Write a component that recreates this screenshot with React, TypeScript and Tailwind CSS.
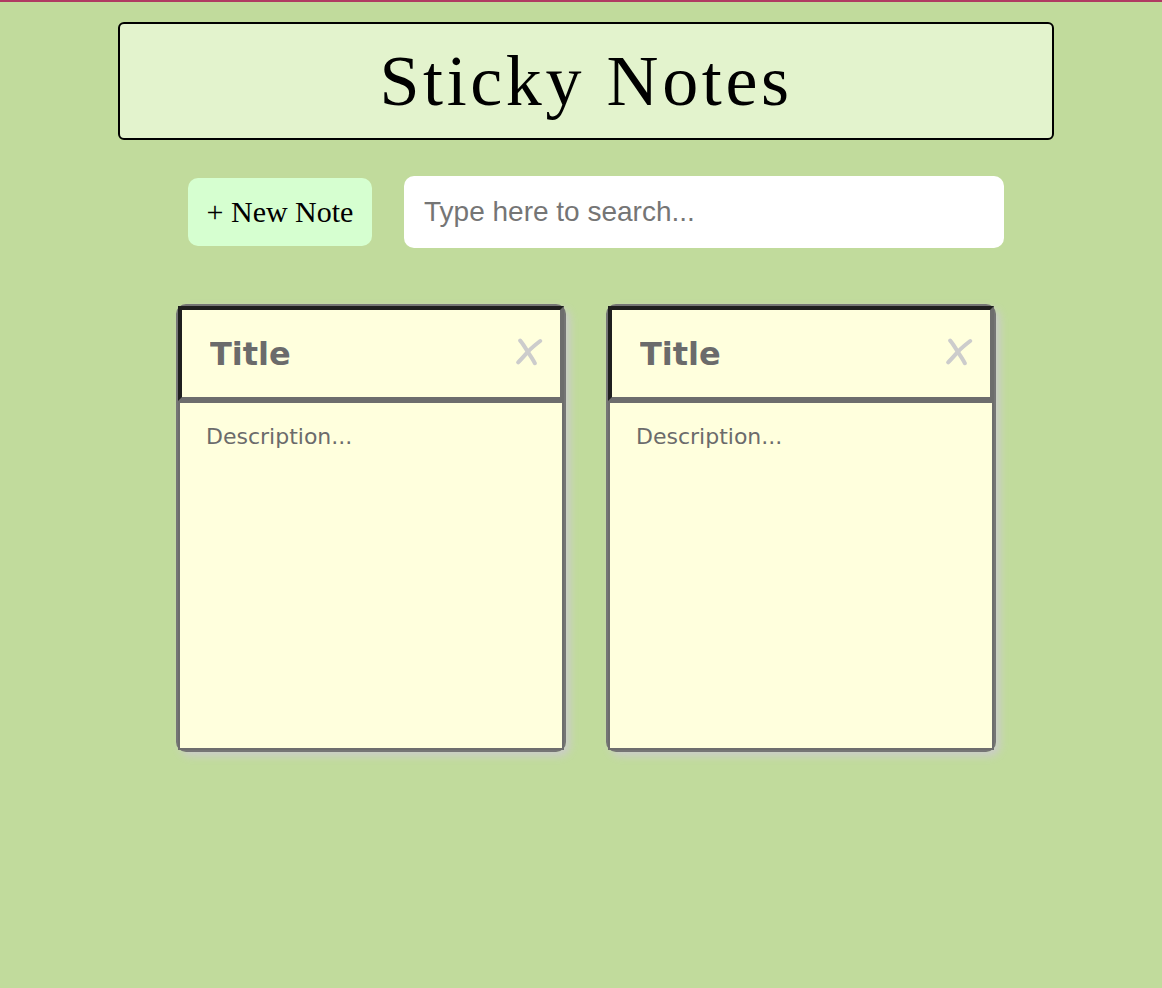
import { useState } from "react";

type Note = { id: number; title: string; description: string };

function CrossIcon() {
  return (
    <svg
      viewBox="0 0 28 28"
      className="size-7"
      fill="none"
      stroke="#cccccc"
      strokeWidth="4"
      strokeLinecap="round"
      aria-hidden="true"
    >
      <path d="M4.200 2.600C6.500 5.200 9.500 10 12 14.200C14.500 18 17 21.500 18.800 25.200" />
      <path d="M24.200 3C19.500 6.600 15.200 10.200 11.600 14C8.500 17.500 5.500 21 2.200 24.300" />
    </svg>
  );
}

type NoteCardProps = {
  note: Note;
  onChange: (note: Note) => void;
  onDelete: () => void;
};

function NoteCard({ note, onChange, onDelete }: NoteCardProps) {
  return (
    <li className="flex flex-col rounded-[10px] border-2 border-[#757575] shadow-[4px_4px_8px_#cccccc]">
      <div className="flex items-center border-4 border-t-[#1f1f1f] border-r-[#6d6d6d] border-b-[#6d6d6d] border-l-[#1f1f1f] bg-[#ffffdd] pr-4 pl-7">
        <input
          type="text"
          aria-label="Note title"
          placeholder="Title"
          value={note.title}
          onChange={(e) => onChange({ ...note, title: e.target.value })}
          className="h-[87px] min-w-0 flex-1 bg-transparent font-['DejaVu_Sans',sans-serif] text-[32px] font-bold text-[#6b6b6b] outline-none placeholder:text-[#6b6b6b]"
        />
        <button
          type="button"
          aria-label="Delete note"
          onClick={onDelete}
          className="cursor-pointer pb-1"
        >
          <CrossIcon />
        </button>
      </div>
      <textarea
        aria-label="Note description"
        placeholder="Description..."
        value={note.description}
        onChange={(e) => onChange({ ...note, description: e.target.value })}
        className="block h-[349px] w-full resize-none border-2 border-[#6d6d6d] bg-[#ffffdd] px-[26px] py-5 font-['DejaVu_Sans',sans-serif] text-[22px] leading-7 text-[#6b6b6b] outline-none placeholder:text-[#6b6b6b]"
      />
    </li>
  );
}

export default function App() {
  const [notes, setNotes] = useState<Note[]>([
    { id: 1, title: "", description: "" },
    { id: 2, title: "", description: "" },
  ]);
  const [query, setQuery] = useState("");

  const visible = notes.filter((n) =>
    (n.title + " " + n.description).toLowerCase().includes(query.toLowerCase()),
  );

  return (
    <div className="min-h-screen border-t-2 border-[#b03a62] bg-[#c1db9c] pt-5 pr-[108px] pb-10 pl-[118px]">
      <header className="rounded-md border-2 border-black bg-[#e3f3cd] py-5 text-center">
        <h1 className="font-['Liberation_Serif',serif] text-7xl leading-[74px] tracking-wider text-black">
          Sticky Notes
        </h1>
      </header>
      <main>
        <div className="mt-9 mr-[50px] ml-[70px] flex items-center gap-8">
          <button
            type="button"
            onClick={() => setNotes([...notes, { id: Date.now(), title: "", description: "" }])}
            className="h-[68px] w-[184px] shrink-0 cursor-pointer rounded-[10px] bg-[#d6ffd0] font-['Liberation_Serif',serif] text-3xl whitespace-nowrap text-black"
          >
            + New Note
          </button>
          <input
            type="text"
            aria-label="Search notes"
            placeholder="Type here to search..."
            value={query}
            onChange={(e) => setQuery(e.target.value)}
            className="h-[72px] min-w-0 flex-1 rounded-[10px] bg-white px-5 font-['Liberation_Sans',sans-serif] text-[28px] text-black outline-none placeholder:text-[#757575]"
          />
        </div>
        <ul className="mx-[58px] mt-14 grid grid-cols-2 gap-10">
          {visible.map((note) => (
            <NoteCard
              key={note.id}
              note={note}
              onChange={(next) => setNotes(notes.map((n) => (n.id === next.id ? next : n)))}
              onDelete={() => setNotes(notes.filter((n) => n.id !== note.id))}
            />
          ))}
        </ul>
      </main>
    </div>
  );
}
